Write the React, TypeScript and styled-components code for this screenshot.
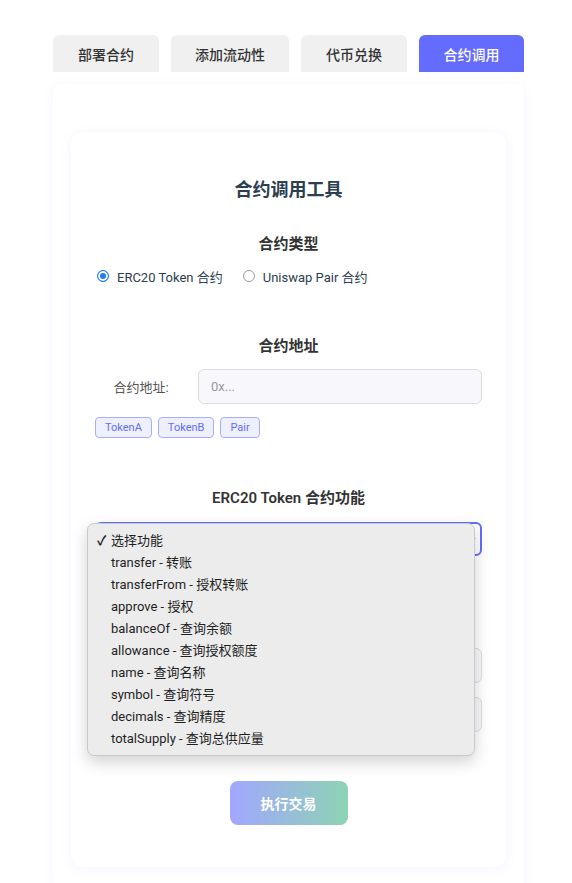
import React from "react";
import styled, { createGlobalStyle } from "styled-components";

const Global = createGlobalStyle`
  html, body { margin: 0; padding: 0; background: #ffffff; }
  body { font-family: Roboto, "Noto Sans CJK SC", "DejaVu Sans", sans-serif; color: #2c3e50; }
  * { box-sizing: border-box; }
`;

const Page = styled.div`
  padding: 35px 48px 0 53px;
  width: 572px;
`;

const Tabs = styled.div`
  display: flex;
  gap: 12px;
`;

const Tab = styled.button<{ $active?: boolean; $w: number }>`
  width: ${(p) => p.$w}px;
  height: 37px;
  border: none;
  border-radius: 6px 6px 0 0;
  background: ${(p) => (p.$active ? "#646cff" : "#f0f0f0")};
  color: ${(p) => (p.$active ? "#ffffff" : "#333333")};
  font-family: inherit;
  font-size: 14px;
  font-weight: 500;
  padding: 0;
  cursor: pointer;
`;

const Panel = styled.div`
  margin-top: 12px;
  background: #fff;
  box-shadow: 0 2px 12px rgba(100, 108, 255, 0.07);
  border-radius: 8px 8px 0 0;
  padding: 48px 18px 20px;
`;

const Card = styled.div`
  position: relative;
  background: #fff;
  border-radius: 12px;
  box-shadow: 0 2px 12px rgba(100, 108, 255, 0.08);
  padding: 46px 24px 42px;
  display: flex;
  flex-direction: column;
`;

const Title = styled.h2`
  margin: 0;
  font-size: 18px;
  line-height: 24px;
  font-weight: 700;
  text-align: center;
  color: #2c3e50;
`;

const Heading = styled.h3<{ $mt: number }>`
  margin: ${(p) => p.$mt}px 0 0;
  font-size: 15px;
  line-height: 20px;
  font-weight: 600;
  text-align: center;
  color: #333;
`;

const RadioRow = styled.div`
  margin-top: 13px;
  display: flex;
  align-items: center;
  height: 18px;
  padding-left: 2px;
`;

const RadioLabel = styled.label`
  display: flex;
  align-items: center;
  gap: 8px;
  font-size: 13px;
  color: #2c3e50;
  margin-right: 20px;
`;

const RadioDot = styled.span<{ $checked?: boolean }>`
  width: 12px;
  height: 12px;
  border-radius: 50%;
  border: 1px solid ${(p) => (p.$checked ? "#1f7cf5" : "#9a9a9a")};
  background: ${(p) => (p.$checked ? "#1f7cf5" : "#fff")};
  box-shadow: ${(p) => (p.$checked ? "inset 0 0 0 2px #fff" : "none")};
  display: inline-block;
`;

const FieldRow = styled.div<{ $mt: number }>`
  margin-top: ${(p) => p.$mt}px;
  display: flex;
  align-items: center;
  gap: 11px;
`;

const FieldLabel = styled.span`
  flex: 0 0 92px;
  text-align: center;
  font-size: 13px;
  color: #555;
`;

const TextInput = styled.input`
  flex: 1;
  min-width: 0;
  height: 35px;
  border: 1px solid #dcdce0;
  border-radius: 6px;
  background: #f8f8fc;
  padding: 0 12px;
  font-family: inherit;
  font-size: 13px;
  color: #333;
  &::placeholder { color: #999; }
`;

const Tags = styled.div`
  margin-top: 13px;
  display: flex;
  gap: 6px;
`;

const Tag = styled.button`
  height: 21px;
  padding: 0 9px;
  border: 1px solid #a9adff;
  background: #eef0ff;
  color: #646cff;
  border-radius: 4px;
  font-family: inherit;
  font-size: 11px;
  font-weight: 400;
`;

const SelectWrap = styled.div`
  position: relative;
  margin-top: 14px;
`;

const SelectBox = styled.div`
  height: 34px;
  border: 2px solid #646cff;
  border-radius: 6px;
  background: #fff;
  display: flex;
  align-items: center;
  justify-content: flex-end;
  padding-right: 4px;
  color: #333;
`;

const Menu = styled.ul`
  position: absolute;
  left: -8px;
  top: 1px;
  width: 388px;
  margin: 0;
  padding: 6px 0 5px;
  list-style: none;
  background: #ececec;
  border: 1px solid #c9c9c9;
  border-radius: 7px;
  box-shadow: 0 6px 16px rgba(0, 0, 0, 0.18);
  z-index: 5;
`;

const MenuItem = styled.li`
  position: relative;
  height: 22px;
  line-height: 22px;
  padding-left: 23px;
  font-size: 13px;
  color: #1f1f1f;
`;

const Check = styled.span`
  position: absolute;
  left: 9px;
  top: 0;
  font-size: 13px;
  font-weight: 700;
`;

const ExecButton = styled.button`
  align-self: center;
  margin-top: 49px;
  width: 118px;
  height: 44px;
  border: none;
  border-radius: 8px;
  background: linear-gradient(90deg, #646cff, #42b883);
  opacity: 0.6;
  color: #fff;
  font-family: inherit;
  font-size: 14px;
  font-weight: 600;
`;

const items = [
  "transfer - 转账",
  "transferFrom - 授权转账",
  "approve - 授权",
  "balanceOf - 查询余额",
  "allowance - 查询授权额度",
  "name - 查询名称",
  "symbol - 查询符号",
  "decimals - 查询精度",
  "totalSupply - 查询总供应量",
];

export default function App() {
  return (
    <Page>
      <Global />
      <Tabs>
        <Tab $w={106}>部署合约</Tab>
        <Tab $w={118}>添加流动性</Tab>
        <Tab $w={106}>代币兑换</Tab>
        <Tab $w={105} $active>
          合约调用
        </Tab>
      </Tabs>
      <Panel>
        <Card>
          <Title>合约调用工具</Title>
          <Heading $mt={32}>合约类型</Heading>
          <RadioRow>
            <RadioLabel>
              <RadioDot $checked />
              ERC20 Token 合约
            </RadioLabel>
            <RadioLabel>
              <RadioDot />
              Uniswap Pair 合约
            </RadioLabel>
          </RadioRow>
          <Heading $mt={51}>合约地址</Heading>
          <FieldRow $mt={13}>
            <FieldLabel>合约地址:</FieldLabel>
            <TextInput placeholder="0x..." />
          </FieldRow>
          <Tags>
            <Tag>TokenA</Tag>
            <Tag>TokenB</Tag>
            <Tag>Pair</Tag>
          </Tags>
          <Heading $mt={50}>ERC20 Token 合约功能</Heading>
          <SelectWrap>
            <SelectBox>
              <svg width="8" height="8" viewBox="0 0 8 8">
                <path d="M1 5 L4 2 M4 6 L7 3" stroke="#222" strokeWidth="1.4" fill="none" />
              </svg>
            </SelectBox>
            <Menu>
              <MenuItem>
                <Check>✓</Check>选择功能
              </MenuItem>
              {items.map((t) => (
                <MenuItem key={t}>{t}</MenuItem>
              ))}
            </Menu>
          </SelectWrap>
          <FieldRow $mt={92}>
            <TextInput />
          </FieldRow>
          <FieldRow $mt={14}>
            <TextInput />
          </FieldRow>
          <ExecButton>执行交易</ExecButton>
        </Card>
      </Panel>
    </Page>
  );
}
